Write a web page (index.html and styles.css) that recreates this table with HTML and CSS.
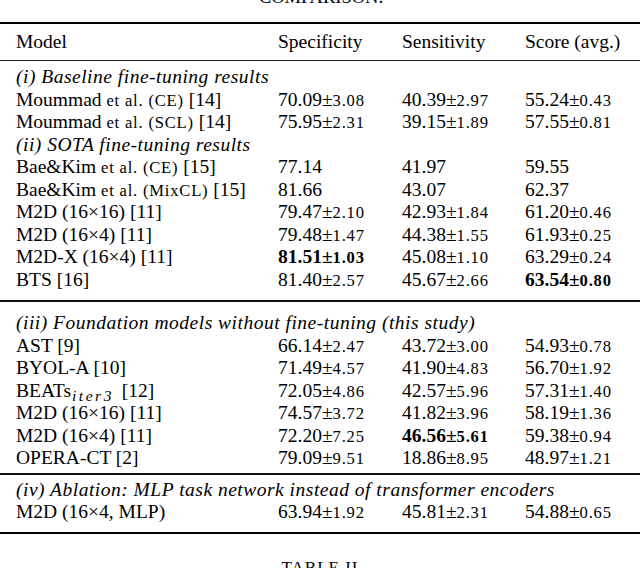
FILE: index.html
```html
<!DOCTYPE html>
<html>
<head>
<meta charset="utf-8">
<link rel="stylesheet" href="styles.css">
</head>
<body>
<div class="cap-top">COMPARISON.</div>
<div class="rule thick r-top"></div>
<div class="row head">
  <div>Model</div><div>Specificity</div><div>Sensitivity</div><div>Score (avg.)</div>
</div>
<div class="rule thin r-head"></div>
<div class="section s1">
  <div class="row"><div class="group">(i) Baseline fine-tuning results</div></div>
  <div class="row"><div>Moummad <span class="sm">et al. (CE)</span> [14]</div><div>70.09±<span class="sm">3.08</span></div><div>40.39±<span class="sm">2.97</span></div><div>55.24±<span class="sm">0.43</span></div></div>
  <div class="row"><div>Moummad <span class="sm">et al. (SCL)</span> [14]</div><div>75.95±<span class="sm">2.31</span></div><div>39.15±<span class="sm">1.89</span></div><div>57.55±<span class="sm">0.81</span></div></div>
  <div class="row"><div class="group">(ii) SOTA fine-tuning results</div></div>
  <div class="row"><div>Bae&amp;Kim <span class="sm">et al. (CE)</span> [15]</div><div>77.14</div><div>41.97</div><div>59.55</div></div>
  <div class="row"><div>Bae&amp;Kim <span class="sm">et al. (MixCL)</span> [15]</div><div>81.66</div><div>43.07</div><div>62.37</div></div>
  <div class="row"><div>M2D (16×16) [11]</div><div>79.47±<span class="sm">2.10</span></div><div>42.93±<span class="sm">1.84</span></div><div>61.20±<span class="sm">0.46</span></div></div>
  <div class="row"><div>M2D (16×4) [11]</div><div>79.48±<span class="sm">1.47</span></div><div>44.38±<span class="sm">1.55</span></div><div>61.93±<span class="sm">0.25</span></div></div>
  <div class="row"><div>M2D-X (16×4) [11]</div><div><b>81.51±<span class="sm">1.03</span></b></div><div>45.08±<span class="sm">1.10</span></div><div>63.29±<span class="sm">0.24</span></div></div>
  <div class="row"><div>BTS [16]</div><div>81.40±<span class="sm">2.57</span></div><div>45.67±<span class="sm">2.66</span></div><div><b>63.54±<span class="sm">0.80</span></b></div></div>
</div>
<div class="rule mid r-2"></div>
<div class="section s2">
  <div class="row"><div class="group">(iii) Foundation models without fine-tuning (this study)</div></div>
  <div class="row"><div>AST [9]</div><div>66.14±<span class="sm">2.47</span></div><div>43.72±<span class="sm">3.00</span></div><div>54.93±<span class="sm">0.78</span></div></div>
  <div class="row"><div>BYOL-A [10]</div><div>71.49±<span class="sm">4.57</span></div><div>41.90±<span class="sm">4.83</span></div><div>56.70±<span class="sm">1.92</span></div></div>
  <div class="row"><div>BEATs<span class="sub">iter3</span> [12]</div><div>72.05±<span class="sm">4.86</span></div><div>42.57±<span class="sm">5.96</span></div><div>57.31±<span class="sm">1.40</span></div></div>
  <div class="row"><div>M2D (16×16) [11]</div><div>74.57±<span class="sm">3.72</span></div><div>41.82±<span class="sm">3.96</span></div><div>58.19±<span class="sm">1.36</span></div></div>
  <div class="row"><div>M2D (16×4) [11]</div><div>72.20±<span class="sm">7.25</span></div><div><b>46.56±<span class="sm">5.61</span></b></div><div>59.38±<span class="sm">0.94</span></div></div>
  <div class="row"><div>OPERA-CT [2]</div><div>79.09±<span class="sm">9.51</span></div><div>18.86±<span class="sm">8.95</span></div><div>48.97±<span class="sm">1.21</span></div></div>
</div>
<div class="rule mid r-3"></div>
<div class="section s3">
  <div class="row"><div class="group">(iv) Ablation: MLP task network instead of transformer encoders</div></div>
  <div class="row"><div>M2D (16×4, MLP)</div><div>63.94±<span class="sm">1.92</span></div><div>45.81±<span class="sm">2.31</span></div><div>54.88±<span class="sm">0.65</span></div></div>
</div>
<div class="rule thick r-bot"></div>
<div class="cap-bot">TABLE II</div>
</body>
</html>
```
FILE: styles.css
```css
html, body {
  margin: 0;
  padding: 0;
  background: #fff;
  color: #000;
  overflow: hidden;
}
body {
  width: 640px;
  height: 568px;
  font-family: "Liberation Serif", "Times New Roman", serif;
  font-size: 19.5px;
}
.cap-top {
  font-size: 18.5px;
  line-height: 20px;
  height: 20px;
  margin-top: -13px;
  text-align: center;
  padding-left: 2px;
}
.rule { width: 640px; }
.thick { height: 2px; background: #000; }
.thin { height: 1px; background: #222; }
.mid { height: 2px; background: #111; }
.r-top { margin-top: 15px; }
.row {
  display: grid;
  grid-template-columns: 262px 124px 123px 1fr;
  padding-left: 16px;
  line-height: 22.5px;
  height: 22.5px;
  white-space: nowrap;
}
.head { margin-top: 7px; }
.r-head { margin-top: 6.5px; }
.s1 { margin-top: 5px; }
.r-2 { margin-top: 9px; }
.s2 { margin-top: 10px; }
.r-3 { margin-top: 3px; }
.s3 { margin-top: 4px; }
.r-bot { margin-top: 8.5px; }
.group {
  grid-column: 1 / -1;
  font-style: italic;
  letter-spacing: 0.5px;
}
.sm {
  font-size: 0.85em;
  letter-spacing: 0.8px;
}
b { font-weight: bold; }
.sub {
  font-size: 0.8em;
  font-style: italic;
  position: relative;
  top: 4px;
  letter-spacing: 2.5px;
  margin-left: 1px;
  margin-right: 3px;
}
.cap-bot {
  margin-top: 24px;
  font-size: 17px;
  line-height: 20px;
  text-align: center;
  letter-spacing: 1px;
}
```
